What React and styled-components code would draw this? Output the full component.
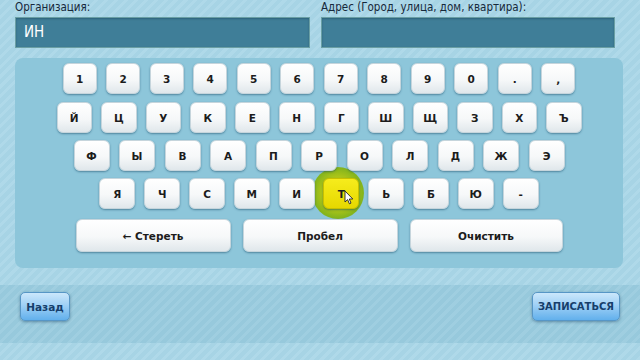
import React from 'react'
import styled, { createGlobalStyle } from 'styled-components'

const GlobalStyle = createGlobalStyle`
  html, body {
    margin: 0;
    padding: 0;
  }
  body {
    font-family: 'DejaVu Sans', Verdana, sans-serif;
  }
`;

const stripes = (base, line) => `repeating-linear-gradient(135deg, ${base} 0px, ${base} 4px, ${line} 4px, ${line} 7px)`;

const Page = styled.div`
  width: 640px;
  height: 360px;
  overflow: hidden;
  background: ${stripes('#a7d4e5', '#afd9e9')};
  display: flex;
  flex-direction: column;
`;

const Fields = styled.div`
  display: grid;
  grid-template-columns: 295px 294px;
  column-gap: 11px;
  padding: 0 25px 0 15px;
`;

const Field = styled.div`
  display: flex;
  flex-direction: column;
`;

const Label = styled.div`
  font-family: 'DejaVu Sans Condensed', 'DejaVu Sans', sans-serif;
  font-size: 11.5px;
  color: #16283a;
  height: 17px;
  line-height: 14px;
`;

const Input = styled.div`
  box-sizing: border-box;
  height: 31px;
  background: #3f7e98;
  border: 1px solid #6a9fa4;
  box-shadow: inset 0 1px 2px rgba(0, 30, 50, 0.3);
  color: #ffffff;
  font-family: 'DejaVu Sans Condensed', 'DejaVu Sans', sans-serif;
  font-size: 15px;
  line-height: 29px;
  padding-left: 8px;
`;

const Panel = styled.div`
  position: relative;
  z-index: 0;
  margin: 10px 17px 0 15px;
  height: 210px;
  box-sizing: border-box;
  padding-top: 5px;
  background: #8dc6da;
  border-radius: 8px;
  display: flex;
  flex-direction: column;
  align-items: center;
`;

const Row = styled.div`
  display: flex;
  gap: ${p => p.$gap || 9}px;
  margin-bottom: ${p => p.$mb || 7}px;
`;

const Key = styled.div`
  position: relative;
  box-sizing: border-box;
  width: ${p => p.$w || 36}px;
  height: ${p => p.$h || 31}px;
  border-radius: 6px;
  border: 1px solid ${p => (p.$active ? '#c8c000' : '#c6d5dc')};
  background: ${p => (p.$active
    ? 'linear-gradient(#f6ec1c, #e6d800)'
    : 'linear-gradient(#ffffff 0%, #f6f8f9 55%, #e0e7eb 100%)')};
  box-shadow: 0 1px 2px rgba(20, 70, 100, 0.5);
  display: flex;
  align-items: center;
  justify-content: center;
  font-family: 'DejaVu Sans', Verdana, sans-serif;
  font-weight: bold;
  font-size: 10.5px;
  color: #1c1c1c;

  ${p => p.$active && `
    &::before {
      content: '';
      position: absolute;
      left: -12px;
      top: -12px;
      width: 52px;
      height: 52px;
      border-radius: 50%;
      background: radial-gradient(circle, #e0e010 0%, #b4c818 40%, #84b41c 68%, rgba(120, 176, 30, 0.5) 88%, rgba(120, 176, 30, 0) 100%);
      z-index: -1;
    }
  `}
`;

const Cursor = styled.svg`
  position: absolute;
  left: 20px;
  top: 11px;
  width: 10px;
  height: 15px;
`;

const Footer = styled.div`
  margin-top: 17px;
  height: 58px;
  box-sizing: border-box;
  padding: 7px 20px 0 20px;
  background: ${stripes('#97c9dc', '#9fcee0')};
  display: flex;
  justify-content: space-between;
  align-items: flex-start;
`;

const NavButton = styled.div`
  box-sizing: border-box;
  width: ${p => p.$w}px;
  height: 29px;
  border-radius: 5px;
  border: 1px solid #5796c6;
  background: linear-gradient(#cbe7fb 0%, #9fd0f6 45%, #62b0ec 100%);
  box-shadow: 0 1px 3px rgba(20, 60, 90, 0.45);
  display: flex;
  align-items: center;
  justify-content: center;
  font-family: 'DejaVu Sans', Verdana, sans-serif;
  font-weight: bold;
  font-size: ${p => p.$fs || 10.5}px;
  color: #163e6b;
`;

const rows = [
  { keys: ['1', '2', '3', '4', '5', '6', '7', '8', '9', '0', '.', ','], w: 34, gap: 9.5 },
  { keys: ['Й', 'Ц', 'У', 'К', 'Е', 'Н', 'Г', 'Ш', 'Щ', 'З', 'Х', 'Ъ'], w: 35.5, gap: 9 },
  { keys: ['Ф', 'Ы', 'В', 'А', 'П', 'Р', 'О', 'Л', 'Д', 'Ж', 'Э'], w: 36, gap: 9.5 },
  { keys: ['Я', 'Ч', 'С', 'М', 'И', 'Т', 'Ь', 'Б', 'Ю', '-'], w: 36, gap: 8.8 },
];

export default function App() {
  return (
    <Page>
      <GlobalStyle />
      <Fields>
        <Field>
          <Label>Организация:</Label>
          <Input>ИН</Input>
        </Field>
        <Field>
          <Label>Адрес (Город, улица, дом, квартира):</Label>
          <Input />
        </Field>
      </Fields>

      <Panel>
        {rows.map((row, i) => (
          <Row key={i} $gap={row.gap} $mb={i === 0 ? 8 : i === 3 ? 10 : 7}>
            {row.keys.map(k => (
              <Key key={k} $w={row.w} $active={k === 'Т'}>
                {k}
                {k === 'Т' && (
                  <Cursor viewBox="0 0 10 15">
                    <path d="M1 1 L1 12 L3.6 9.6 L5.4 13.8 L7 13.1 L5.3 9 L8.8 9 Z" fill="#ffffff" stroke="#222" strokeWidth="0.9" strokeLinejoin="round" />
                  </Cursor>
                )}
              </Key>
            ))}
          </Row>
        ))}
        <Row $gap={12}>
          <Key $w={155} $h={33}>← Стереть</Key>
          <Key $w={155} $h={33}>Пробел</Key>
          <Key $w={153} $h={33}>Очистить</Key>
        </Row>
      </Panel>

      <Footer>
        <NavButton $w={50}>Назад</NavButton>
        <NavButton $w={88} $fs={10}>ЗАПИСАТЬСЯ</NavButton>
      </Footer>
    </Page>
  )
}
